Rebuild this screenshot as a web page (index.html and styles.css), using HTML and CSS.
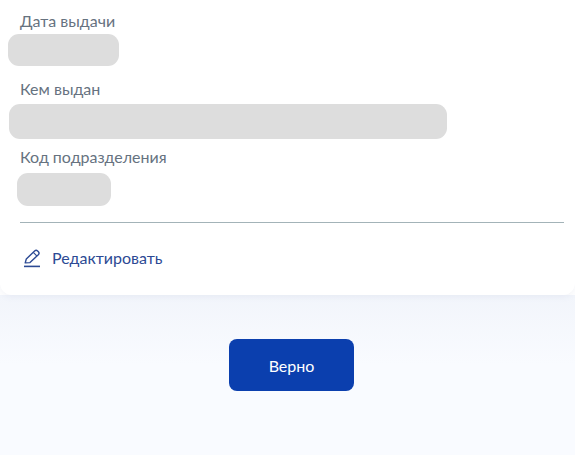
FILE: index.html
```html
<!DOCTYPE html>
<html lang="en">
<head>
  <meta charset="UTF-8">
  <title>Паспорт</title>
  <link rel="stylesheet" href="styles.css">
</head>
<body>

  <div class="card">
    <div class="field field-date">
      <div class="label">Дата выдачи</div>
      <div class="mask mask-date"></div>
    </div>
    <div class="field field-issuer">
      <div class="label">Кем выдан</div>
      <div class="mask mask-issuer"></div>
    </div>
    <div class="field field-code">
      <div class="label">Код подразделения</div>
      <div class="mask mask-code"></div>
    </div>

    <div class="divider"></div>

    <a class="edit" href="#">
      <svg class="edit-icon" width="18" height="19" viewBox="0 0 18 19" fill="none" stroke="currentColor">
        <path d="M2.2 13.9 L3.3 10 L11.6 2 C12.5 1.1 13.6 1 14.6 1.9 L15.4 2.7 C16.3 3.7 16.2 4.8 15.3 5.7 L7 13.6 Z" stroke-width="1.4" stroke-linejoin="round"/>
        <path d="M10.3 3.4 L14 7.1" stroke-width="1.2"/>
        <path d="M1 17.4 H17" stroke-width="1.6"/>
      </svg>
      <span>Редактировать</span>
    </a>
  </div>

  <div class="actions">
    <button class="btn">Верно</button>
  </div>

</body>
</html>
```

FILE: styles.css
```css
:root {
  --text-muted: #66727f;
  --link: #2c4a94;
  --accent: #0b3fae;
  --mask: #dddddd;
}

body {
  margin: 0;
  height: 455px;
  overflow: hidden;
  display: flex;
  flex-direction: column;
  font-family: Lato, sans-serif;
}

.card {
  position: relative;
  height: 295px;
  flex-shrink: 0;
  box-sizing: border-box;
  padding-top: 11px;
  background-color: #fff;
  border-radius: 0 0 12px 12px;
  box-shadow: 0 2px 6px rgba(100, 120, 160, 0.08);
}

.label {
  margin-left: 20px;
  font-size: 16px;
  line-height: 20px;
  color: var(--text-muted);
}

.mask {
  background-color: var(--mask);
  border-radius: 11px;
}

.mask-date {
  width: 111px;
  height: 32px;
  margin-left: 8px;
  margin-top: 3px;
}

.field-issuer {
  margin-top: 13px;
}

.mask-issuer {
  width: 438px;
  height: 35px;
  margin-left: 9px;
  margin-top: 5px;
}

.field-code {
  margin-top: 8px;
}

.mask-code {
  width: 94px;
  height: 33px;
  margin-left: 17px;
  margin-top: 6px;
}

.divider {
  height: 1px;
  margin: 16px 11px 0 20px;
  background-color: #a3b3b8;
}

.edit {
  display: flex;
  align-items: center;
  gap: 11px;
  margin: 25px 0 0 23px;
  font-size: 16px;
  line-height: 20px;
  color: var(--link);
  text-decoration: none;
}

.actions {
  flex: 1;
  display: flex;
  justify-content: center;
  align-items: flex-start;
  padding: 44px 0 0 8px;
  background: linear-gradient(#f2f5fb, #f9fbff 70px);
}

.btn {
  width: 125px;
  height: 52px;
  font-family: Lato, sans-serif;
  font-size: 16px;
  font-weight: 400;
  border: none;
  border-radius: 8px;
  background-color: var(--accent);
  color: #fff;
  cursor: pointer;
}
```
